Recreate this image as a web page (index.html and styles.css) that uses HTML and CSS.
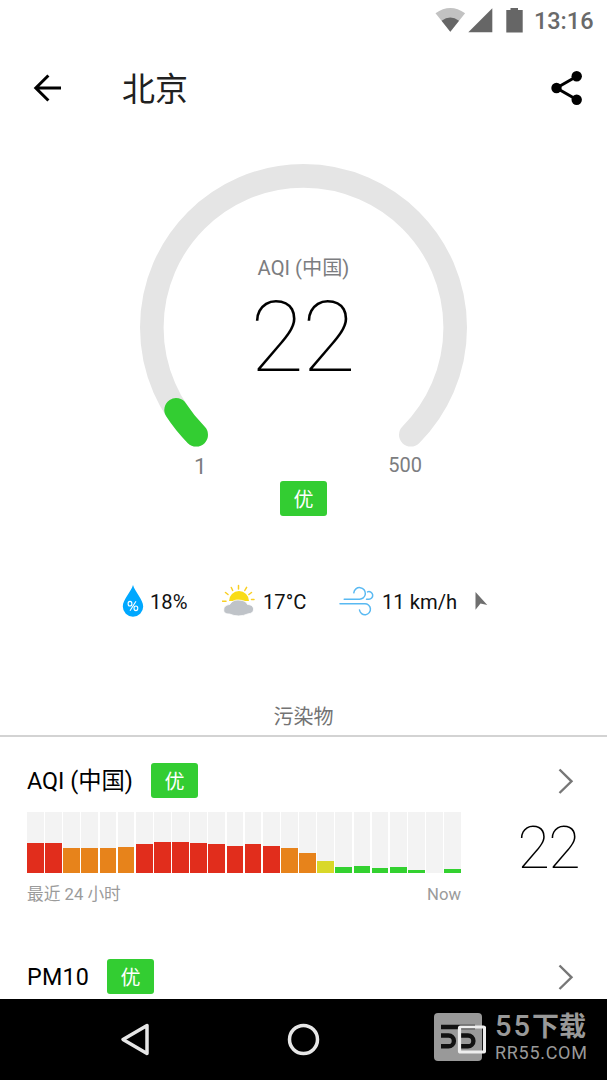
FILE: index.html
```html
<!DOCTYPE html>
<html lang="zh-CN">
<head>
<meta charset="utf-8">
<title>北京</title>
<link rel="stylesheet" href="styles.css">
</head>
<body>
<div class="screen">
  <div class="statusbar">
    <svg class="status-icons" width="92" height="40" viewBox="0 0 92 40">
      <path d="M4.500 13.200Q19.300 2.800 34.100 13.200L19.300 31.800Z" fill="#c2c2c2"/>
      <path d="M10.600 20.800Q19.300 14.200 28 20.800L19.300 31.800Z" fill="#666"/>
      <path d="M37.300 32.200H61.300V8.200Z" fill="#666"/>
      <path d="M79.500 8h7.500v2h4.700v22.500H75.300V10h4.200Z" fill="#666"/>
    </svg>
    <span class="clock">13:16</span>
  </div>
  <header class="appbar">
    <svg width="30" height="30" viewBox="0 0 30 30" fill="none" stroke="#000" stroke-width="3"><path d="M29 15H4M16.400 2.500L3.800 15L16.400 27.500"/></svg>
    <h1 class="title">北京</h1>
    <svg width="32" height="36" viewBox="0 0 32 36"><path d="M26 6.300L5.500 18L26 29.700" fill="none" stroke="#000" stroke-width="3"/><circle cx="25.700" cy="6.300" r="5.200"/><circle cx="5.500" cy="18" r="5.200"/><circle cx="25.700" cy="29.700" r="5.200"/></svg>
  </header>
  <section class="gauge">
    <svg class="dial" width="327" height="290" viewBox="0 0 327 290" fill="none" stroke-width="23.600" stroke-linecap="round">
      <path d="M56.200 271.800A151.700 151.700 0 1 1 270.800 271.800" stroke="#e5e5e5"/>
      <path d="M56.200 271.800A151.700 151.700 0 0 1 36.100 246.900" stroke="#33cd32"/>
    </svg>
    <div class="reading">
      <span class="reading-label">AQI (中国)</span>
      <span class="reading-value">22</span>
    </div>
  </section>
  <div class="scale"><span class="scale-min">1</span><span class="scale-max">500</span></div>
  <div class="rating"><span class="badge">优</span></div>
  <section class="weather">
    <div class="metric humidity">
      <svg width="22" height="34" viewBox="0 0 22 34"><path d="M11 1C9 8 .8 15.500 .8 22.500a10.200 10.200 0 0 0 20.400 0C21.200 15.500 13 8 11 1Z" fill="#00a8ff"/><g fill="none" stroke="#fff" stroke-width="1.100"><ellipse cx="8" cy="19.700" rx="1.900" ry="2.300"/><ellipse cx="13.900" cy="24.300" rx="1.900" ry="2.300"/><path d="M14 17.300L8 26.700"/></g></svg>
      <span class="metric-value">18%</span>
    </div>
    <div class="metric temperature">
      <svg width="33" height="34" viewBox="0 0 33 34"><path d="M7 17A10 10 0 0 1 27 17Z" fill="#f9dc16"/><path d="M16.500 1.500V5M9.300 3.500l1.400 3M24.600 3.300L22.800 6.500M3.500 8.500l2.500 2M29.500 8.500l-2.600 2M.5 17.200H4M29.500 15.500h2.500" stroke="#f9cf22" stroke-width="1.500" stroke-linecap="round"/><path d="M7.500 30C3 30 1.500 28 1.800 25.700C1.800 22 5 21 8 20.300C10 16.500 14.500 15.500 18 16.200C22 16.300 24.500 18 25.500 20.500C29.500 20.500 32 23 31.500 26C31 28.500 29 29.600 26.500 29.700Q16.500 34 7.500 30Z" fill="#bfc3c8" stroke="#fff" stroke-width=".8"/></svg>
      <span class="metric-value">17°C</span>
    </div>
    <div class="metric wind">
      <svg width="36" height="32" viewBox="0 0 36 32" fill="none" stroke="#59b9f2" stroke-width="1.500"><path d="M5.200 14.200H20A5.800 5.800 0 1 0 14.800 7.800M1 18.700H25.500A5.500 5.500 0 1 1 20.500 25M27.500 14.200H29.500A3.800 3.800 0 1 0 28.500 6.900" stroke-linecap="round"/></svg>
      <span class="metric-value">11 km/h</span>
      <svg class="direction" width="14" height="18" viewBox="0 0 14 18"><path d="M1.500 0L13.300 12.900L6.500 11.500L1.500 17.700Z" fill="#6f6f6f"/></svg>
    </div>
  </section>
  <h2 class="section-title">污染物</h2>
  <section class="pollutant">
    <div class="pollutant-head"><span class="name">AQI (中国)</span><span class="badge">优</span><svg class="chevron" width="16" height="26" viewBox="0 0 16 26"><path d="M1.500 1.500L13.500 13.300L1.500 25"/></svg></div>
    <div class="pollutant-body">
      <div class="history">
        <div class="bars">
          <i class="bar red" style="--v:29.5px"></i><i class="bar red" style="--v:30px"></i><i class="bar orange" style="--v:24.500px"></i><i class="bar orange" style="--v:25px"></i><i class="bar orange" style="--v:25px"></i><i class="bar orange" style="--v:26px"></i><i class="bar red" style="--v:29px"></i><i class="bar red" style="--v:31px"></i><i class="bar red" style="--v:30.500px"></i><i class="bar red" style="--v:30px"></i><i class="bar red" style="--v:29px"></i><i class="bar red" style="--v:27.300px"></i><i class="bar red" style="--v:28.500px"></i><i class="bar red" style="--v:26.600px"></i><i class="bar orange" style="--v:25px"></i><i class="bar orange" style="--v:20.500px"></i><i class="bar yellow" style="--v:12.500px"></i><i class="bar green" style="--v:6.300px"></i><i class="bar green" style="--v:7px"></i><i class="bar green" style="--v:5.300px"></i><i class="bar green" style="--v:6px"></i><i class="bar green" style="--v:3.500px"></i><i class="bar green" style="--v:0px"></i><i class="bar green" style="--v:4px"></i>
        </div>
        <div class="legend"><span>最近 24 小时</span><span>Now</span></div>
      </div>
      <span class="current">22</span>
    </div>
  </section>
  <section class="pollutant">
    <div class="pollutant-head"><span class="name name-latin">PM10</span><span class="badge">优</span><svg class="chevron" width="16" height="26" viewBox="0 0 16 26"><path d="M1.500 1.500L13.500 13.300L1.500 25"/></svg></div>
  </section>
  <nav class="navbar">
    <svg class="keys" width="607" height="81" viewBox="0 0 607 81" fill="none" stroke="#e6e6e6" stroke-width="3.500" stroke-linejoin="round"><path d="M123 40.500L147 26.500V54.500Z"/><circle cx="303.500" cy="40.500" r="14"/></svg>
    <div class="watermark">
      <svg width="52" height="48" viewBox="0 0 52 48"><rect width="48" height="48" rx="4" fill="#999"/><path d="M7 14H41M7 22.500H14.500A5 5 0 0 1 14.500 33.300H7M27 22.500H34A5 5 0 0 1 34 33.300H27" fill="none" stroke="#111" stroke-width="4.400"/><rect x="25.500" y="14" width="25" height="25" rx="1" fill="none" stroke="#eee" stroke-width="3.200"/></svg>
      <div class="watermark-text"><span class="brand"><span class="brand-number">55</span>下载</span><span class="site">RR55.COM</span></div>
    </div>
  </nav>
</div>
</body>
</html>
```
FILE: styles.css
```css
* { box-sizing: border-box; }
body { margin: 0; background: #fff; font-family: Roboto, "Noto Sans CJK SC", sans-serif; color: #111; }
svg { display: block; flex: none; }
.screen { width: 607px; height: 1080px; overflow: hidden; display: flex; flex-direction: column; }
.statusbar { height: 40px; flex: none; display: flex; justify-content: flex-end; padding-right: 13.5px; }
.status-icons { width: 92px; margin-right: 11px; }
.clock { font-size: 23.5px; font-weight: 500; line-height: 43px; color: #696969; }
.appbar { height: 95px; flex: none; display: flex; align-items: center; padding: 0 24px 0 32px; }
.title { margin: 4px auto 0 60px; font-size: 33px; font-weight: 400; line-height: 40px; color: #212121; }
.gauge { height: 317px; flex: none; display: grid; justify-items: center; }
.dial { grid-area: 1 / 1; margin-top: 28px; }
.reading { grid-area: 1 / 1; display: flex; flex-direction: column; align-items: center; padding-top: 121px; }
.reading-label { font-size: 20.2px; line-height: 25px; color: #7c7d80; }
.reading-value { font-size: 98px; font-weight: 100; line-height: 113px; letter-spacing: -2px; padding-right: 3px; color: #000; }
.scale { height: 27px; flex: none; display: flex; justify-content: space-between; padding: 0 185px 0 194px; font-size: 20px; line-height: 27px; color: #7c7d80; }
.scale-min { font-size: 22.5px; line-height: 28px; }
.rating { display: flex; justify-content: center; padding-top: 2px; }
.badge { width: 47px; height: 35px; flex: none; border-radius: 3px; background: #33cd32; color: #fff; font-size: 20px; line-height: 38px; text-align: center; }
.weather { display: flex; align-items: center; height: 34px; margin: 68px 0 0 122px; font-size: 20.2px; line-height: 34px; }
.metric { display: flex; align-items: center; white-space: nowrap; }
.metric-value { padding-top: 2px; }
.humidity { gap: 6px; width: 100px; }
.temperature { gap: 8px; width: 117px; }
.wind { gap: 7px; }
.direction { margin-left: 10px; }
.section-title { margin: 83px 0 0; height: 36px; flex: none; border-bottom: 2px solid #d3d3d3; font-size: 20px; font-weight: 400; line-height: 33px; text-align: center; color: #737373; }
.pollutant { flex: none; padding: 26px 28px 0 27px; }
.pollutant-head { display: flex; align-items: center; height: 35px; }
.name { font-size: 23.3px; line-height: 36px; margin-right: 18px; color: #000; }
.name-latin { letter-spacing: .2px; }
.chevron { margin-left: auto; margin-right: 5px; fill: none; stroke: #777; stroke-width: 2.4; }
.pollutant-body { display: flex; justify-content: space-between; padding-top: 14px; height: 135px; }
.history { width: 434px; }
.bars { height: 61px; display: grid; grid-template-columns: repeat(24, 1fr); gap: 1.5px; }
.bar { background: linear-gradient(to top, var(--c) var(--v), #f3f3f3 var(--v)); }
.red { --c: #e12d1c; }
.orange { --c: #e7831b; }
.yellow { --c: #d9d829; }
.green { --c: #33d130; }
.legend { display: flex; justify-content: space-between; font-size: 16.7px; line-height: 43px; color: #9b9b9b; }
.current { font-size: 59px; font-weight: 100; line-height: 71px; letter-spacing: -1.5px; color: #000; }
.navbar { position: absolute; top: 999px; left: 0; width: 607px; height: 81px; background: #000; display: grid; }
.keys { grid-area: 1 / 1; }
.watermark { grid-area: 1 / 1; display: flex; gap: 9px; padding: 14px 0 0 434px; color: #999; }
.watermark-text { display: flex; flex-direction: column; white-space: nowrap; }
.brand { display: flex; font-size: 27px; font-weight: 700; line-height: 28px; }
.brand-number { font-size: 29px; font-weight: 500; line-height: 27px; letter-spacing: 2px; }
.site { font-size: 18px; line-height: 23px; letter-spacing: .7px; }
```
